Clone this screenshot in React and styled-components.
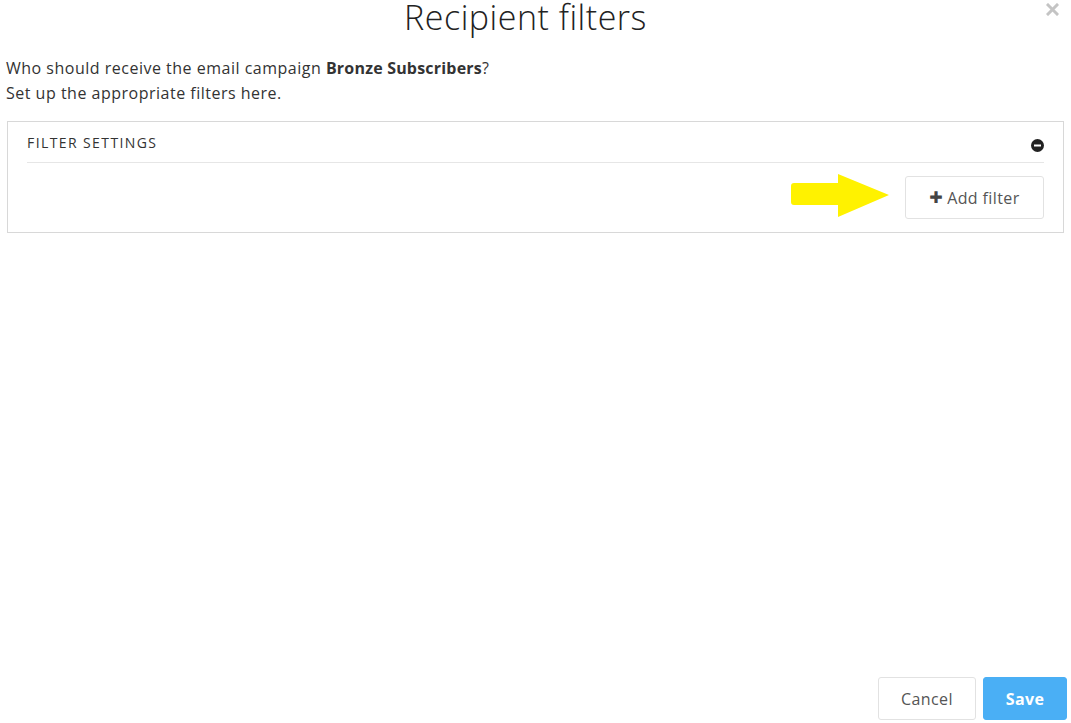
import styled, { createGlobalStyle } from 'styled-components'

const GlobalStyle = createGlobalStyle`
  html, body {
    margin: 0;
    padding: 0;
    background: #fff;
  }
  body {
    font-family: "Open Sans", Lato, "Liberation Sans", sans-serif;
    color: #333;
  }
`

const ArrowIcon = () => (
  <svg width="100" height="45" viewBox="0 0 100 45">
    <path
      d="M3 9 H47 V0 L98 21 L47 43 V31 H3 Q0 31 0 28 V12 Q0 9 3 9 Z"
      fill="#fff200"
    />
  </svg>
)

const MinusCircle = () => (
  <svg width="13" height="13" viewBox="0 0 13 13">
    <circle cx="6.5" cy="6.5" r="6.5" fill="#222" />
    <rect x="3" y="5.5" width="7" height="2" fill="#fff" />
  </svg>
)

const CloseIcon = () => (
  <svg width="13" height="13" viewBox="0 0 13 13">
    <path d="M2 2 L11 11 M11 2 L2 11" stroke="#c4c4c4" strokeWidth="3" strokeLinecap="square" />
  </svg>
)

const App = () => {
  return (
    <>
      <GlobalStyle />
      <Modal>
        <Header>
          <Title>Recipient filters</Title>
          <Close aria-label="Close">
            <CloseIcon />
          </Close>
        </Header>
        <Intro>
          Who should receive the email campaign <b>Bronze Subscribers</b>?
          <br />
          Set up the appropriate filters here.
        </Intro>
        <Panel>
          <PanelHead>
            <PanelTitle>FILTER SETTINGS</PanelTitle>
            <MinusCircle />
          </PanelHead>
          <PanelBody>
            <ArrowIcon />
            <GhostButton>
              <Plus>✚</Plus> Add filter
            </GhostButton>
          </PanelBody>
        </Panel>
        <Spacer />
        <Footer>
          <Button>Cancel</Button>
          <Button primary>Save</Button>
        </Footer>
      </Modal>
    </>
  )
}

export default App

const Modal = styled.div`
  height: 723px;
  box-sizing: border-box;
  display: flex;
  flex-direction: column;
  padding: 0 4px 3px 6px;
`

const Header = styled.div`
  display: flex;
  align-items: flex-start;
  height: 52px;
`

const Title = styled.h1`
  flex: 1;
  margin: 0;
  text-align: center;
  font-weight: 300;
  font-size: 34px;
  line-height: 34px;
  letter-spacing: 0.5px;
  color: #222;
  padding-left: 4px;
`

const Close = styled.span`
  width: 22px;
  padding-top: 3px;
  margin-right: 4px;
  display: flex;
  justify-content: center;
`

const Intro = styled.p`
  margin: 4px 0 15px;
  font-size: 16px;
  letter-spacing: 0.5px;
  line-height: 25px;
  color: #333;

  b {
    font-weight: 700;
    letter-spacing: 0.2px;
  }
`

const Panel = styled.div`
  margin: 0 3px 0 1px;
  border: 1px solid #d8d8d8;
  padding: 0 19px 13px 19px;
`

const PanelHead = styled.div`
  display: flex;
  justify-content: space-between;
  align-items: center;
  height: 40px;
  border-bottom: 1px solid #e6e6e6;

  svg {
    margin-top: 6px;
  }
`

const PanelTitle = styled.span`
  font-size: 14px;
  letter-spacing: 1.4px;
  color: #333;
`

const PanelBody = styled.div`
  display: flex;
  justify-content: flex-end;
  align-items: center;
  gap: 14px;
  padding-top: 13px;

  svg {
    margin-top: -2px;
  }
`

const GhostButton = styled.button`
  width: 139px;
  height: 43px;
  border: 1px solid #e2e2e2;
  border-radius: 3px;
  background: #fff;
  font-family: inherit;
  font-size: 16px;
  letter-spacing: 0.4px;
  color: #555;
  display: flex;
  align-items: center;
  justify-content: center;
  gap: 4px;
`

const Plus = styled.span`
  font-family: "DejaVu Sans", sans-serif;
  font-size: 16px;
  color: #444;
`

const Spacer = styled.div`
  flex: 1;
`

const Footer = styled.div`
  display: flex;
  justify-content: flex-end;
  gap: 7px;
`

const Button = styled.button`
  height: 43px;
  min-width: ${p => (p.primary ? '84px' : '98px')};
  padding: 0 16px;
  border-radius: 3px;
  border: 1px solid ${p => (p.primary ? '#4aaff5' : '#e2e2e2')};
  background: ${p => (p.primary ? '#4aaff5' : '#fff')};
  color: ${p => (p.primary ? '#fff' : '#555')};
  font-family: inherit;
  font-weight: ${p => (p.primary ? 700 : 400)};
  font-size: 16px;
  letter-spacing: 0.4px;
`
